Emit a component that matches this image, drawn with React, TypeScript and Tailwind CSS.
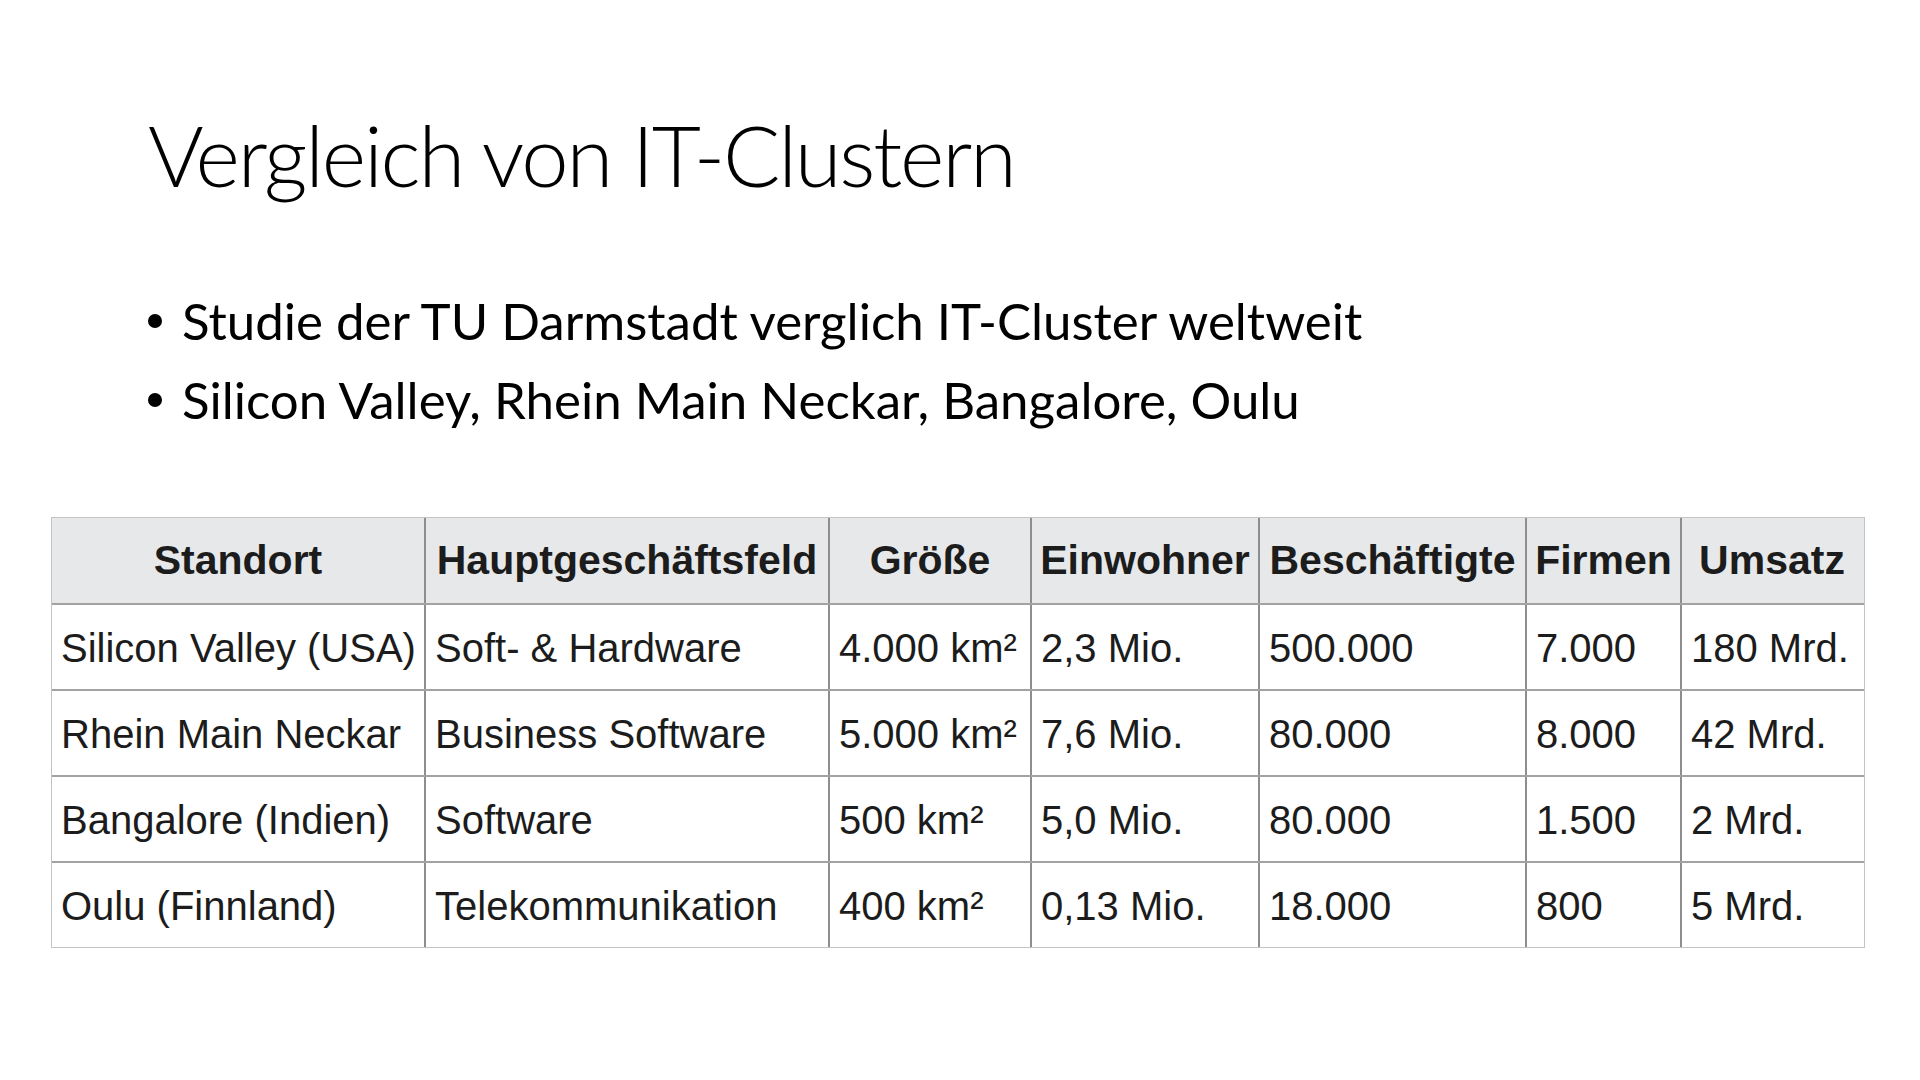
const headers = ["Standort", "Hauptgeschäftsfeld", "Größe", "Einwohner", "Beschäftigte", "Firmen", "Umsatz"];

const rows = [
  ["Silicon Valley (USA)", "Soft- & Hardware", "4.000 km²", "2,3 Mio.", "500.000", "7.000", "180 Mrd."],
  ["Rhein Main Neckar", "Business Software", "5.000 km²", "7,6 Mio.", "80.000", "8.000", "42 Mrd."],
  ["Bangalore (Indien)", "Software", "500 km²", "5,0 Mio.", "80.000", "1.500", "2 Mrd."],
  ["Oulu (Finnland)", "Telekommunikation", "400 km²", "0,13 Mio.", "18.000", "800", "5 Mrd."],
];

const cols = "grid grid-cols-[372px_404px_202px_228px_267px_155px_182px]";

export default function App() {
  return (
    <div className="w-[1920px] h-[1080px] bg-white overflow-hidden font-['Lato',sans-serif] text-black">
      <div className="pl-[148px] pt-[112px]">
        <h1 className="text-[85px] font-light leading-none tracking-[-2.2px]">Vergleich von IT-Clustern</h1>
        <ul className="mt-[98px] flex flex-col gap-[28px] text-[51px] leading-none">
          <li className="flex items-center">
            <span className="w-[14px] h-[14px] rounded-full bg-black mr-[20px]" />
            Studie der TU Darmstadt verglich IT-Cluster weltweit
          </li>
          <li className="flex items-center">
            <span className="w-[14px] h-[14px] rounded-full bg-black mr-[20px]" />
            Silicon Valley, Rhein Main Neckar, Bangalore, Oulu
          </li>
        </ul>
      </div>

      <div className="ml-[51px] mt-[92px] w-[1814px] border border-[#c4c4c4] font-['Liberation_Sans',Arial,sans-serif] text-[#1c1c1c]">
        <div className={`${cols} h-[85px] bg-[#e6e8ea]`}>
          {headers.map((h, i) => (
            <div
              key={h}
              className={`flex items-center justify-center text-[41px] font-bold ${i > 0 ? "border-l-2 border-[#8e8e8e]" : ""}`}
            >
              {h}
            </div>
          ))}
        </div>
        {rows.map((r) => (
          <div key={r[0]} className={`${cols} h-[86px] border-t-2 border-[#a2a2a2]`}>
            {r.map((c, i) => (
              <div
                key={i}
                className={`flex items-center pl-[9px] pt-[2px] text-[40px] ${i > 0 ? "border-l-2 border-[#8e8e8e]" : ""}`}
              >
                {c}
              </div>
            ))}
          </div>
        ))}
      </div>
    </div>
  );
}
